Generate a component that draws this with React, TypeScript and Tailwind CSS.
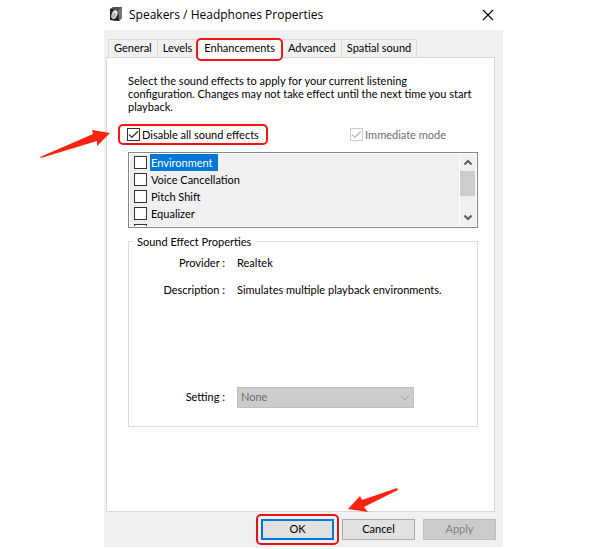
import { ReactElement } from "react"

type CheckboxProps = {
  id: string
  label: string
  checked?: boolean
  disabled?: boolean
}

const tabs = ["General", "Levels", "Enhancements", "Advanced", "Spatial sound"]

const effects = [
  { id: "environment", label: "Environment", selected: true },
  { id: "voice-cancellation", label: "Voice Cancellation" },
  { id: "pitch-shift", label: "Pitch Shift" },
  { id: "equalizer", label: "Equalizer" },
  { id: "virtual-surround", label: "" },
]

const SpeakerIcon = (): ReactElement => (
  <svg className="size-4 shrink-0" viewBox="0 0 16 16" aria-hidden="true">
    <path d="M2 2 5 0h9v11l-3 3-9-1z" fill="#555" />
    <path d="M10 3l4-2v10l-3 3z" fill="#777" />
    <path d="M2 2l8 1 1 11-9-1z" fill="#222" />
    <ellipse cx="6.500" cy="7.500" rx="2.800" ry="4.500" fill="#e4e4e4" transform="rotate(22 6.500 7.500)" />
    <ellipse cx="6" cy="8.500" rx="1.600" ry="2.500" fill="#aaa" transform="rotate(22 6 8.500)" />
  </svg>
)

const CheckMark = (): ReactElement => (
  <svg
    viewBox="0 0 13 13"
    fill="none"
    className="pointer-events-none invisible col-start-1 row-start-1 size-[13px] stroke-[#333] peer-checked:visible peer-disabled:stroke-[#bbb]"
    aria-hidden="true"
  >
    <path d="M2 6.500 4.800 9.300 11 3.200" strokeWidth="1.200" />
  </svg>
)

const CheckBox = ({ id, label, checked, disabled }: CheckboxProps): ReactElement => (
  <span className="grid size-[13px] shrink-0">
    <input
      id={id}
      type="checkbox"
      defaultChecked={checked}
      disabled={disabled}
      aria-label={label || "More effects"}
      className="peer col-start-1 row-start-1 size-[13px] appearance-none border border-[#333] bg-white disabled:border-[#ccc]"
    />
    <CheckMark />
  </span>
)

const Option = (props: CheckboxProps): ReactElement => (
  <div className="flex h-[17px] items-center gap-0.5">
    <CheckBox {...props} />
    <label htmlFor={props.id} className={props.disabled ? "leading-[17px] text-[#6d6d6d]" : "leading-[17px]"}>
      {props.label}
    </label>
  </div>
)

const Tabs = (): ReactElement => (
  <div role="tablist" className="flex h-5 items-end pl-0.5">
    {tabs.map((tab) =>
      tab === "Enhancements" ? (
        <button
          key={tab}
          role="tab"
          aria-selected="true"
          className="relative z-10 -mx-px -mb-1 h-[23px] rounded-[5px] border-2 border-[#f51414] bg-white px-1.5 pb-0.5 whitespace-nowrap"
        >
          {tab}
        </button>
      ) : (
        <button
          key={tab}
          role="tab"
          aria-selected="false"
          className="-mr-px h-[18px] border border-b-0 border-[#d9d9d9] bg-[#f0f0f0] px-[5px] whitespace-nowrap"
        >
          {tab}
        </button>
      )
    )}
  </div>
)

const EffectList = (): ReactElement => (
  <div className="flex h-[76px] border border-[#828790] bg-white p-px">
    <div className="flex-1 overflow-hidden bg-[#f0f0f0] pl-1">
      {effects.map(({ id, label, selected }) => (
        <div key={id} className="flex h-[17px] items-center gap-[3px]">
          <CheckBox id={id} label={label} />
          {label && (
            <label
              htmlFor={id}
              className={
                selected
                  ? "bg-[#0078d7] pr-[5px] pl-px leading-[17px] text-white"
                  : "pl-px leading-[17px]"
              }
            >
              {label}
            </label>
          )}
        </div>
      ))}
    </div>
    <div className="ml-px flex w-4 flex-col bg-[#f0f0f0]">
      <button aria-label="Scroll up" className="flex h-[17px] items-center justify-center">
        <svg className="h-[7px] w-2" viewBox="0 0 8 7" fill="none" stroke="#606060" strokeWidth="2" aria-hidden="true">
          <path d="M0.500 5.500 4 2l3.500 3.500" />
        </svg>
      </button>
      <div className="mr-px h-[25px] bg-[#cdcdcd]" />
      <button aria-label="Scroll down" className="mt-auto flex h-[17px] items-center justify-center">
        <svg className="h-[7px] w-2" viewBox="0 0 8 7" fill="none" stroke="#606060" strokeWidth="2" aria-hidden="true">
          <path d="M0.500 1.500 4 5l3.500-3.500" />
        </svg>
      </button>
    </div>
  </div>
)

const EffectProperties = (): ReactElement => (
  <fieldset className="mt-1.5 h-[193px] border border-[#dcdcdc] px-2">
    <legend className="-ml-1 px-1 leading-[15px]">Sound Effect Properties</legend>
    <dl className="grid grid-cols-[88px_1fr] gap-x-3 gap-y-3 pt-1.5 leading-[15px]">
      <dt className="text-right">Provider :</dt>
      <dd>Realtek</dd>
      <dt className="text-right">Description :</dt>
      <dd>Simulates multiple playback environments.</dd>
    </dl>
    <div className="mt-[90px] grid grid-cols-[88px_177px] items-center gap-x-3">
      <label htmlFor="setting" className="text-right">Setting :</label>
      <div className="grid items-center">
        <select
          id="setting"
          disabled
          className="col-start-1 row-start-1 h-[21px] w-full appearance-none border border-[#bfbfbf] bg-[#ccc] pl-[3px] text-[#6d6d6d] opacity-100"
        >
          <option>None</option>
        </select>
        <svg
          className="pointer-events-none col-start-1 row-start-1 mr-1 h-1.5 w-2.5 justify-self-end"
          viewBox="0 0 10 6"
          fill="none"
          stroke="#a0a0a0"
          aria-hidden="true"
        >
          <path d="m1 1 4 4 4-4" />
        </svg>
      </div>
    </div>
  </fieldset>
)

const App = (): ReactElement => {
  return (
    <main className="min-h-screen bg-white pr-[97px] pl-[104px] font-[Lato,sans-serif] text-[11px] text-black">
      <section aria-label="Speakers / Headphones Properties">
        <header className="flex h-[30px] items-center gap-1 pr-[7px] pl-1">
          <SpeakerIcon />
          <h1 className="flex-1 pl-px font-['Open_Sans',sans-serif] text-xs">Speakers / Headphones Properties</h1>
          <button aria-label="Close" className="flex size-4 items-center justify-center">
            <svg className="size-3" viewBox="0 0 12 12" stroke="#000" strokeWidth="1.100" aria-hidden="true">
              <path d="m1 1 10 10M11 1 1 11" />
            </svg>
          </button>
        </header>

        <div className="bg-[#f0f0f0] px-2 pt-[7px] pb-[7px]">
          <div className="-ml-1.5">
            <Tabs />
            <div className="border border-[#d9d9d9] bg-white px-4 pt-4 pb-[84px] pl-[21px]">
              <p className="leading-[13px]">
                Select the sound effects to apply for your current listening
                <br />
                configuration. Changes may not take effect until the next time you start
                <br />
                playback.
              </p>
              <div className="relative -ml-[10px] flex items-center justify-between pt-[11px] pr-8">
                <div className="rounded-[5px] border-2 border-[#f51414] px-[7px]">
                  <Option id="disable-all" label="Disable all sound effects" checked />
                </div>
                <Option id="immediate" label="Immediate mode" checked disabled />
                <svg
                  className="absolute top-4 right-full mr-[7px] h-[30px] w-[72px]"
                  viewBox="0 0 72 30"
                  fill="#ff2313"
                  aria-hidden="true"
                >
                  <path d="M1 28 54 5l-1-4 18 3-13 13v-5L2 29z" />
                </svg>
              </div>
              <div className="mt-[7px]">
                <EffectList />
              </div>
              <EffectProperties />
            </div>
          </div>

          <footer className="-mr-px flex items-center justify-end gap-2 pt-[7px]">
            <div className="relative -my-[5px] -mr-[5px] rounded-[5px] border-2 border-[#e81414] p-[3px]">
              <button className="h-[21px] w-[73px] border-2 border-[#0078d7] bg-[#e1e1e1]">OK</button>
              <svg
                className="absolute bottom-full left-[90px] mb-1 h-6 w-[51px]"
                viewBox="0 0 51 24"
                fill="#ff2313"
                aria-hidden="true"
              >
                <path d="M0 21 12 8l2 4L49 0l1 2-34 17 4 5z" />
              </svg>
            </div>
            <button className="h-[21px] w-[73px] border border-[#adadad] bg-[#e1e1e1]">Cancel</button>
            <button disabled className="h-[21px] w-[73px] border border-[#bfbfbf] bg-[#ccc] text-[#838383]">Apply</button>
          </footer>
        </div>
      </section>
    </main>
  )
}

export default App
